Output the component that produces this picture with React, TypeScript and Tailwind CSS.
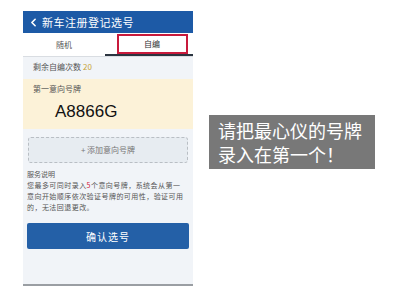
import { ChevronLeft } from "lucide-react";

const cjk = "font-['Noto_Sans_CJK_SC','Noto_Sans',sans-serif]";

export default function App() {
  return (
    <div className={`relative h-[300px] w-[400px] overflow-hidden bg-white ${cjk}`}>
      <div className="flex items-start pl-[23px] pt-[11px]">
        {/* phone screen */}
        <div className="flex h-[275px] w-[170px] flex-col border-b-2 border-[#9a9ea3] bg-[#f1f4f8]">
          <div className="flex h-[22px] items-center bg-[#1d5aa6] pl-[4px] text-white">
            <ChevronLeft className="h-[13px] w-[13px]" strokeWidth={3} />
            <span className="ml-[2px] text-[11px] leading-none tracking-[0.5px]">新车注册登记选号</span>
          </div>

          <div className="flex h-[24px] border-b border-[#d9dde2] bg-white text-[8px] text-[#555]">
            <div className="flex flex-1 items-center justify-center">随机</div>
            <div className="flex flex-1 items-center justify-center border-b-2 border-[#2b3440] pl-[6px]">
              <div className="flex h-[20px] w-[71px] items-center justify-center border-2 border-[#c81a3c] text-[#333]">
                自编
              </div>
            </div>
          </div>

          <div className="flex h-[20px] items-center px-[10px] text-[8px] text-[#555]">
            剩余自编次数 <span className="ml-[2px] text-[#c8a43a]">20</span>
          </div>

          <div className="mt-[2px] h-[50px] bg-[#fcf2d8]">
            <div className="flex h-[20px] items-center px-[10px] text-[8px] text-[#555]">
              第一意向号牌
            </div>
            <div className="pl-[32px] pt-[4px] font-['Liberation_Sans',sans-serif] text-[17px] leading-none text-[#111]">
              A8866G
            </div>
          </div>

          <div className="mx-[5px] mt-[8px] flex h-[26px] items-center justify-center rounded-[3px] border border-dashed border-[#b9bec4] bg-[#e7ecf1] text-[8px] text-[#777]">
            + 添加意向号牌
          </div>

          <div className="px-[4px] pt-[6px] text-[7px] leading-[11px] text-[#555]">
            <div>服务说明</div>
            <div className="whitespace-nowrap tracking-[0.45px]">
              您最多可同时录入<span className="text-[#d0233a]">5</span>个意向号牌，系统会从第一
            </div>
            <div className="whitespace-nowrap tracking-[0.45px]">意向开始顺序依次验证号牌的可用性，验证可用</div>
            <div className="whitespace-nowrap tracking-[0.45px]">的，无法回退更改。</div>
          </div>

          <div className="mx-[4px] mt-[10px] flex h-[26px] items-center justify-center rounded-[2px] bg-[#2460a7] text-[10px] tracking-[1px] text-white">
            确认选号
          </div>
        </div>

        {/* callout */}
        <div className="ml-[16px] mt-[104px] flex h-[54px] w-[166px] flex-col justify-center bg-[#787878] pl-[9px] text-[18px] leading-[24px] text-white">
          <div>请把最心仪的号牌</div>
          <div>录入在第一个！</div>
        </div>
      </div>
    </div>
  );
}
